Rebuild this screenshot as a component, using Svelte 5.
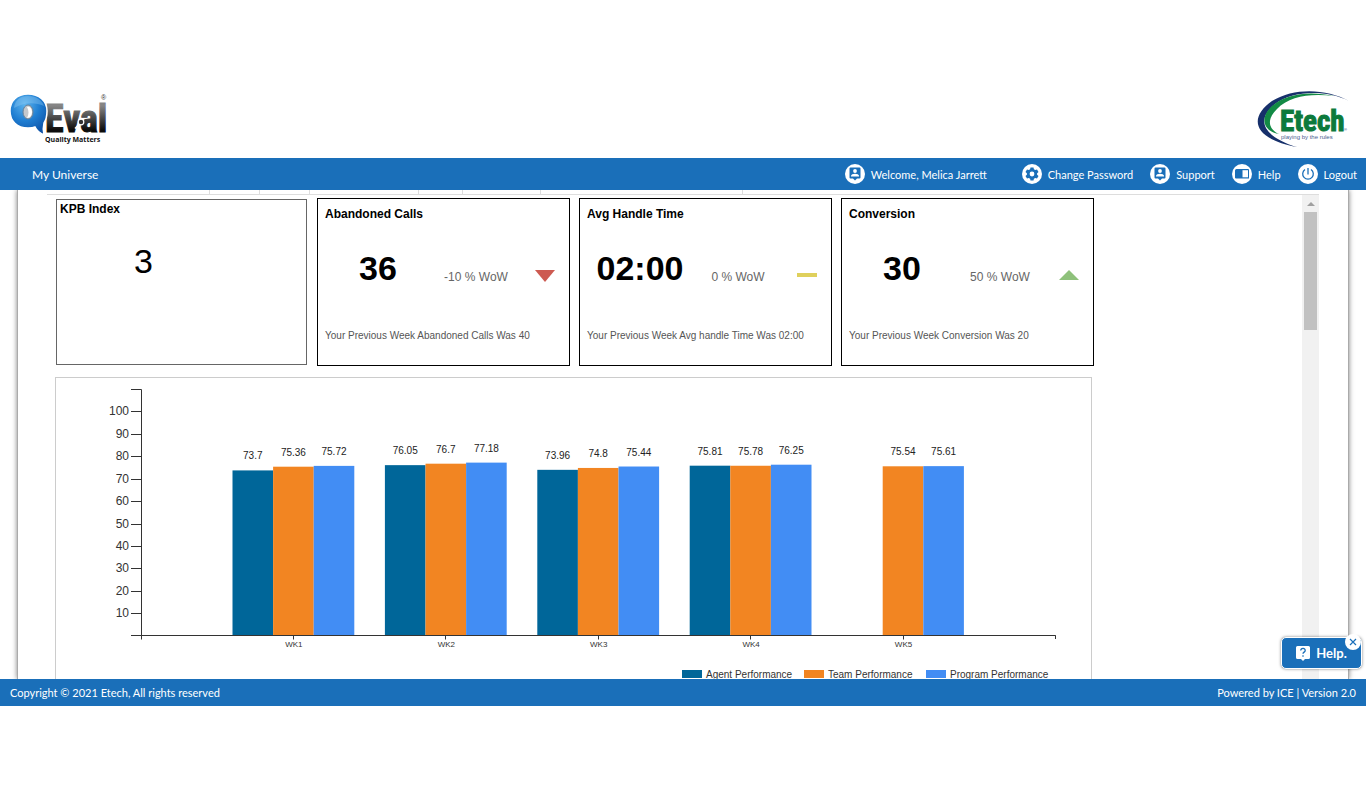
<script lang="ts">
  const navItems = [
    { label: 'Welcome, Melica Jarrett', icon: 'user', wide: true },
    { label: 'Change Password', icon: 'gear', wide: false },
    { label: 'Support', icon: 'user', wide: false },
    { label: 'Help', icon: 'book', wide: false },
    { label: 'Logout', icon: 'power', wide: false }
  ];

  const cards = [
    { title: 'Abandoned Calls', value: '36', change: '-10 % WoW', trend: 'down', note: 'Your Previous Week Abandoned Calls Was 40' },
    { title: 'Avg Handle Time', value: '02:00', change: '0 % WoW', trend: 'flat', note: 'Your Previous Week Avg handle Time Was 02:00' },
    { title: 'Conversion', value: '30', change: '50 % WoW', trend: 'up', note: 'Your Previous Week Conversion Was 20' }
  ];

  const series = [
    { name: 'Agent Performance', color: '#006699', x: 626 },
    { name: 'Team Performance', color: '#f28522', x: 748 },
    { name: 'Program Performance', color: '#428df4', x: 870 }
  ];

  const weeks: { name: string; values: (number | null)[] }[] = [
    { name: 'WK1', values: [73.7, 75.36, 75.72] },
    { name: 'WK2', values: [76.05, 76.7, 77.18] },
    { name: 'WK3', values: [73.96, 74.8, 75.44] },
    { name: 'WK4', values: [75.81, 75.78, 76.25] },
    { name: 'WK5', values: [null, 75.54, 75.61] }
  ];

  const ticks = [10, 20, 30, 40, 50, 60, 70, 80, 90, 100];
  const axisX = 85.5;
  const axisY = 257.5;
  const groupStep = 152.4;
  const barWidth = 40.6;

  const yOf = (v: number) => axisY - v * 2.24;
  const groupX = (i: number) => axisX + groupStep * (i + 1);
  const barX = (i: number, j: number) => groupX(i) - 61.4 + j * barWidth;

  let helpOpen = $state(true);
</script>

<div class="page">
  <header class="brand-bar">
    <svg class="qeval" width="110" height="60" viewBox="0 0 110 60" role="img" aria-label="QEval Quality Matters">
      <defs>
        <linearGradient id="evalFill" x1="0" y1="0" x2="0" y2="1">
          <stop offset="0.2" stop-color="#858585" />
          <stop offset="0.75" stop-color="#0c0c0c" />
        </linearGradient>
        <radialGradient id="bubbleFill" cx="0.4" cy="0.25" r="0.8">
          <stop offset="0" stop-color="#5db4ee" />
          <stop offset="0.5" stop-color="#1f7ed2" />
          <stop offset="1" stop-color="#0b4fa5" />
        </radialGradient>
      </defs>
      <text x="40" y="44" class="logo-eval">Eval</text>
      <path d="M23 6C12 6 5 13 5 23s7 17 18 17c3 0 5 0 7-1 2 4 5 6 9 8-1-4-1-8 0-12 2-3 3-7 3-12C42 13 34 6 23 6z" fill="url(#bubbleFill)" stroke="#fff" stroke-width="1.500" />
      <path d="M9 20c1-8 6-12 14-12s14 4 16 10c-9-4-20-4-30 2z" fill="#9bd0f5" opacity="0.35" />
      <ellipse cx="23" cy="24" rx="5" ry="7" fill="#c4c8cc" stroke="#667f96" stroke-width="1" />
      <path d="M22 19c3-1 5 2 5 5s-2 6-5 6c2-4 2-7 0-11z" fill="#fff" />
      <circle cx="76" cy="34" r="2.800" fill="#333" stroke="#fff" stroke-width="1.200" />
      <path d="M74 36.500l-4 4" stroke="#fff" stroke-width="1.600" />
      <text x="96" y="12" class="logo-mark">®</text>
      <text x="40" y="54" class="logo-tag">Quality Matters</text>
    </svg>

    <svg class="etech" width="100" height="64" viewBox="0 0 100 64" role="img" aria-label="Etech playing by the rules">
      <path d="M94 17C72 5 40 3 17 17-7 34-2 55 42 63 12 54-2 38 20 20 37 7 70 5 94 17z" fill="#17306b" />
      <path d="M79 12C56 7 32 9 17 22 3 35 10 48 24 50 15 46 10 37 22 25 34 12 56 9 79 12z" fill="#138a45" />
      <text x="25" y="47" class="logo-etech">Etech</text>
      <text x="89" y="47" class="logo-reg">®</text>
      <text x="26" y="55" class="logo-rules">playing by the rules</text>
    </svg>
  </header>

  <nav class="top-nav">
    <a href="#universe" class="home-link">My Universe</a>
    <div class="nav-links">
      {#each navItems as item}
        <a href="#{item.icon}" class="nav-link" class:wide={item.wide}>
          <svg class="nav-icon" width="20" height="20" viewBox="0 0 20 20" aria-hidden="true">
            <circle cx="10" cy="10" r="10" fill="#fff" />
            {#if item.icon === 'user'}
              <path d="M5.500 3.500h9a1 1 0 0 1 1 1v9a1 1 0 0 1-1 1H12l-2 2-2-2H5.500a1 1 0 0 1-1-1v-9a1 1 0 0 1 1-1z" fill="#1a6fb9" />
              <circle cx="10" cy="7" r="1.900" fill="#fff" />
              <path d="M6 12c0-3 8-3 8 0v.5H6z" fill="#fff" />
            {:else if item.icon === 'gear'}
              <path d="M8.500 3.500h3l.4 1.800 1.300.8 1.800-.6 1.500 2.500-1.400 1.300v1.400l1.400 1.300-1.500 2.500-1.800-.6-1.300.8-.4 1.800h-3l-.4-1.800-1.300-.8-1.800.6L3.500 12l1.400-1.300V9.300L3.500 8 5 5.500l1.800.6 1.300-.8z" fill="#1a6fb9" />
              <circle cx="10" cy="10" r="2.400" fill="#fff" />
            {:else if item.icon === 'book'}
              <path d="M4.500 5h11.500a1 1 0 0 1 1 1v8.500H4a1 1 0 0 1-1-1v-7A1.500 1.500 0 0 1 4.500 5z" fill="#1a6fb9" />
              <path d="M10.500 6.200H16v7.100h-5.500z" fill="#fff" />
            {:else}
              <path d="M7 5.500a5.300 5.300 0 1 0 6 0M10 4v6.500" fill="none" stroke="#1a6fb9" stroke-width="1.300" />
            {/if}
          </svg>
          <span>{item.label}</span>
        </a>
      {/each}
    </div>
  </nav>

  <main class="content">
    <div class="sheet">
      <div class="tab-strip">
        <span class="tab first"></span>
        <span class="tab short"></span>
        <span class="tab short"></span>
        <span class="tab long"></span>
        <span class="tab short"></span>
        <span class="tab mid"></span>
        <span class="tab last"></span>
      </div>

      <div class="scroll-area">
        <div class="dashboard">
          <div class="cards">
            <section class="card index-card">
              <h2>KPB Index</h2>
              <p class="index-value">3</p>
            </section>
            {#each cards as card}
              <section class="card metric-card">
                <h2>{card.title}</h2>
                <div class="metric">
                  <span class="value">{card.value}</span>
                  <span class="change">{card.change}</span>
                  <svg class="trend" width="20" height="12" viewBox="0 0 20 12" aria-hidden="true">
                    {#if card.trend === 'down'}
                      <path d="M0 0h20L10 12z" fill="#cd5a51" />
                    {:else if card.trend === 'up'}
                      <path d="M0 10h20L10 0z" fill="#8ec17b" />
                    {:else}
                      <rect y="3" width="20" height="4" fill="#dfd05c" />
                    {/if}
                  </svg>
                </div>
                <p class="note">{card.note}</p>
              </section>
            {/each}
          </div>

          <div class="chart">
            <svg viewBox="0 0 1035 320" role="img" aria-label="Weekly performance">
              <g class="axis">
                <path d="M75 11.500H85.500V261.500" />
                <path d="M75 257.500H999.500V261" />
                {#each ticks as tick}
                  <path d="M75 {Math.round(yOf(tick)) + 0.5}H85.500" />
                {/each}
                {#each weeks as week, i}
                  <path d="M{Math.round(groupX(i)) - 0.5} 257.500v4" />
                {/each}
              </g>
              {#each ticks as tick}
                <text class="tick-label" x="73" y={Math.round(yOf(tick)) + 4}>{tick}</text>
              {/each}
              {#each weeks as week, i}
                {#each week.values as value, j}
                  {#if value !== null}
                    <rect x={barX(i, j)} y={yOf(value)} width={barWidth} height={axisY - yOf(value)} fill={series[j].color} />
                    <text class="bar-label" x={barX(i, j) + barWidth / 2} y={Math.round(yOf(value)) - 11}>{value}</text>
                  {/if}
                {/each}
                <text class="week-label" x={groupX(i)} y="269">{week.name}</text>
              {/each}
              <path class="baseline" d="M75 257.500H999.500" />
              {#each series as item}
                <rect x={item.x} y="292" width="20" height="8" fill={item.color} />
                <text class="legend-label" x={item.x + 24} y="300">{item.name}</text>
              {/each}
            </svg>
          </div>
        </div>

        <div class="scroll-rail" aria-hidden="true">
          <span class="rail-arrow"></span>
          <span class="rail-thumb"></span>
        </div>
      </div>
    </div>
  </main>

  <footer class="bottom-bar">
    <span>Copyright © 2021 Etech, All rights reserved</span>
    <span>Powered by ICE | Version 2.0</span>

    {#if helpOpen}
      <div class="help-widget">
        <button class="help-button">
          <svg width="14" height="15" viewBox="0 0 14 15" aria-hidden="true">
            <path d="M1.500 0h11A1.500 1.500 0 0 1 14 1.500v10a1.500 1.500 0 0 1-1.500 1.500H9l-2 2-2-2H1.500A1.500 1.500 0 0 1 0 11.500v-10A1.500 1.500 0 0 1 1.500 0z" fill="#fff" />
            <path d="M4.700 4.500c.2-3 4.700-2.500 4.500.1-.1 1.500-2.200 1.600-2.200 3.200M7 9.200v1.500" fill="none" stroke="#1a6fb9" stroke-width="1.300" />
          </svg>
          Help.
        </button>
        <button class="help-close" aria-label="Close" onclick={() => (helpOpen = false)}>
          <svg width="8" height="8" viewBox="0 0 8 8"><path d="M1 1l6 6M7 1L1 7" stroke="#1a6fb9" stroke-width="1.200" /></svg>
        </button>
      </div>
    {/if}
  </footer>
</div>

<style>
  :global(body) {
    background: #fff;
  }

  .page {
    box-sizing: border-box;
    height: 100vh;
    padding: 84px 0 99px;
    display: flex;
    flex-direction: column;
    font-family: Lato, sans-serif;
    font-size: 11px;
    color: #000;
  }

  .brand-bar {
    flex: none;
    height: 74px;
    display: flex;
    justify-content: space-between;
    align-items: flex-start;
    padding: 0 11px 0 5px;
    box-sizing: border-box;
  }

  .qeval {
    margin-top: 4px;
  }

  .logo-eval {
    font: bold 38px 'Roboto Condensed', 'Open Sans Condensed', 'Liberation Sans', sans-serif;
    fill: url(#evalFill);
    stroke: url(#evalFill);
    stroke-width: 1px;
  }

  .logo-mark {
    font: 7px 'Liberation Sans', sans-serif;
    fill: #333;
  }

  .logo-tag {
    font: bold 7px 'Open Sans', sans-serif;
    fill: #111;
  }

  .logo-etech {
    font: bold 29px 'Roboto Condensed', 'Open Sans Condensed', 'Liberation Sans', sans-serif;
    fill: #0c7a3c;
    stroke: #0c7a3c;
    stroke-width: 1px;
  }

  .logo-reg {
    font: 4px 'Liberation Sans', sans-serif;
    fill: #17306b;
  }

  .logo-rules {
    font: 6px 'Liberation Sans', sans-serif;
    fill: #4a5e90;
  }

  .top-nav {
    flex: none;
    height: 32px;
    display: flex;
    justify-content: space-between;
    align-items: center;
    padding: 0 9px 0 32px;
    background: #1a6fb9;
  }

  .top-nav a {
    color: #fff;
    text-decoration: none;
  }

  .home-link {
    font-size: 12px;
  }

  .nav-links {
    display: flex;
    gap: 17px;
  }

  .nav-link {
    display: flex;
    align-items: center;
    gap: 6px;
  }

  .nav-link.wide {
    margin-right: 18px;
  }

  .content {
    flex: 1;
    min-height: 0;
    overflow: hidden;
    display: flex;
  }

  .sheet {
    flex: 1;
    margin: 0 17px;
    padding: 0 29px;
    border: solid #aaa;
    border-width: 0 1px;
    box-shadow: 0 0 5px rgba(0, 0, 0, 0.5);
    display: flex;
    flex-direction: column;
  }

  .tab-strip {
    flex: none;
    height: 4px;
    display: flex;
    border-bottom: 1px solid #ddd;
  }

  .tab {
    border-right: 1px solid #ddd;
    width: 49px;
  }

  .tab.first {
    width: 162px;
  }

  .tab.long {
    width: 108px;
  }

  .tab.short:nth-child(5) {
    width: 43px;
  }

  .tab.mid {
    width: 77px;
  }

  .tab.last {
    width: 201px;
  }

  .scroll-area {
    flex: 1;
    min-height: 0;
    display: flex;
    justify-content: space-between;
  }

  .dashboard {
    flex: 1;
    max-width: 1039px;
    padding: 3px 0 0 8px;
    font-family: 'Liberation Sans', Arial, sans-serif;
  }

  .cards {
    display: grid;
    grid-template-columns: 252fr 253fr 253fr 253fr;
    gap: 9px;
    padding-left: 1px;
    margin-bottom: 11px;
  }

  .card {
    box-sizing: border-box;
    border: 1px solid #000;
  }

  .card h2 {
    margin: 0;
    font-size: 12px;
    line-height: 16px;
  }

  .index-card {
    align-self: center;
    height: 166px;
    margin-right: 1px;
    padding: 1px 3px;
    border-color: #666;
  }

  .index-value {
    margin: 24px 0 0;
    padding-left: 74px;
    font-size: 34px;
    line-height: 40px;
  }

  .metric-card {
    height: 168px;
    padding-top: 7px;
  }

  .metric-card h2,
  .note {
    padding-left: 7px;
  }

  .metric {
    display: grid;
    grid-template-columns: 120px 76px 1fr;
    align-items: center;
    text-align: center;
    margin-top: 26px;
    height: 40px;
  }

  .value {
    font-size: 34px;
    font-weight: bold;
  }

  .change {
    padding-top: 18px;
    font-size: 12px;
    color: #666;
  }

  .trend {
    justify-self: end;
    margin: 16px 14px 0 0;
  }

  .note {
    margin: 41px 0 0;
    font-size: 10px;
    line-height: 14px;
    color: #555;
    white-space: nowrap;
  }

  .chart {
    margin-right: 2px;
    border: 1px solid #ccc;
  }

  .chart svg {
    display: block;
    width: 100%;
  }

  .axis path,
  .baseline {
    fill: none;
    stroke: #333;
    stroke-width: 1px;
  }

  .tick-label {
    font-size: 12px;
    fill: #333;
    text-anchor: end;
  }

  .bar-label {
    font-size: 10px;
    fill: #222;
    text-anchor: middle;
  }

  .week-label {
    font-size: 8px;
    fill: #333;
    text-anchor: middle;
  }

  .legend-label {
    font-size: 10px;
    fill: #333;
  }

  .scroll-rail {
    width: 17px;
    display: flex;
    flex-direction: column;
    align-items: center;
    background: #f1f1f1;
  }

  .rail-arrow {
    margin: 7px 0 6px;
    border: 4px solid transparent;
    border-top: none;
    border-bottom-color: #a0a0a0;
  }

  .rail-thumb {
    width: 13px;
    height: 118px;
    background: #c1c1c1;
  }

  .bottom-bar {
    position: relative;
    flex: none;
    height: 27px;
    display: flex;
    justify-content: space-between;
    align-items: center;
    padding: 0 10px;
    background: #1a6fb9;
    color: #fff;
  }

  .help-widget {
    position: absolute;
    right: 4px;
    bottom: 37px;
  }

  .help-button {
    display: flex;
    align-items: center;
    justify-content: center;
    gap: 6px;
    width: 81px;
    height: 32px;
    border: 1px solid #fff;
    border-radius: 5px;
    background: #1a6fb9;
    box-shadow: 0 0 3px rgba(0, 0, 0, 0.5);
    color: #fff;
    font: bold 13px Lato, sans-serif;
  }

  .help-close {
    position: absolute;
    top: -3px;
    right: 1px;
    display: flex;
    align-items: center;
    justify-content: center;
    width: 16px;
    height: 16px;
    padding: 0;
    border: none;
    border-radius: 50%;
    background: #fff;
  }
</style>
